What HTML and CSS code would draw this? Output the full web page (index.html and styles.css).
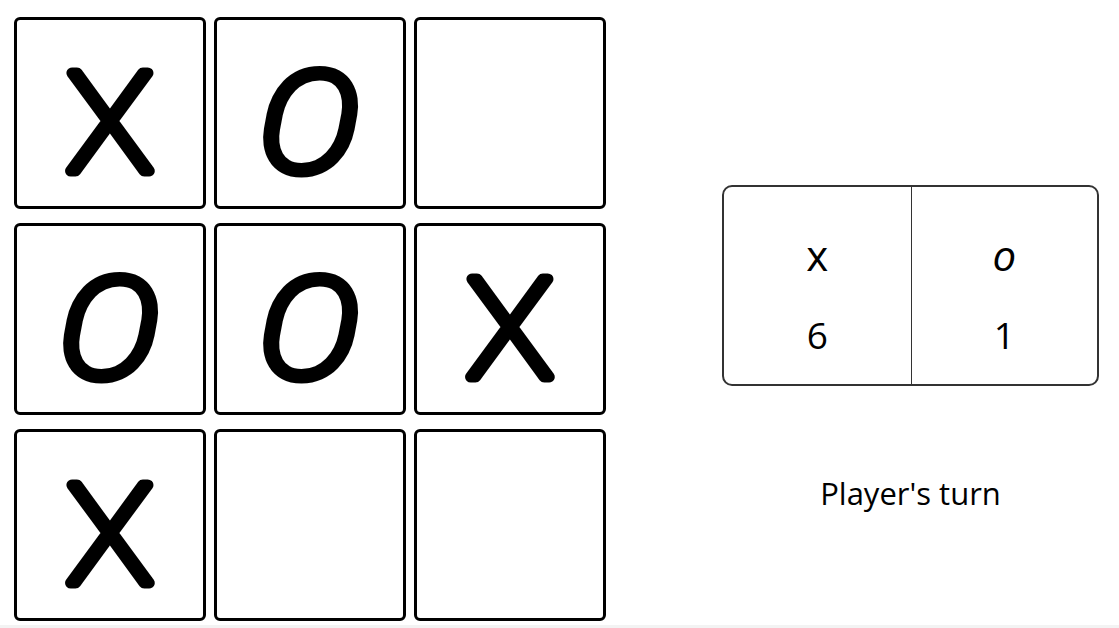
FILE: index.html
```html
<!DOCTYPE html>
<html lang="en">
<head>
<meta charset="utf-8">
<title>Tic Tac Toe</title>
<link rel="stylesheet" href="styles.css">
</head>
<body>
<main class="game">
  <section class="board">
    <div class="cell"><svg class="mark" viewBox="0 0 186 186"><text class="glyph glyph-x" x="93" y="151">X</text></svg></div>
    <div class="cell"><svg class="mark" viewBox="0 0 186 186"><text class="glyph glyph-o" x="92" y="151">O</text></svg></div>
    <div class="cell"></div>
    <div class="cell"><svg class="mark" viewBox="0 0 186 186"><text class="glyph glyph-o" x="92" y="151">O</text></svg></div>
    <div class="cell"><svg class="mark" viewBox="0 0 186 186"><text class="glyph glyph-o" x="92" y="151">O</text></svg></div>
    <div class="cell"><svg class="mark" viewBox="0 0 186 186"><text class="glyph glyph-x" x="93" y="151">X</text></svg></div>
    <div class="cell"><svg class="mark" viewBox="0 0 186 186"><text class="glyph glyph-x" x="93" y="151">X</text></svg></div>
    <div class="cell"></div>
    <div class="cell"></div>
  </section>
  <aside class="panel">
    <div class="score">
      <div class="score-col">
        <div class="player">x</div>
        <div class="points">6</div>
      </div>
      <div class="score-col">
        <div class="player player-o">o</div>
        <div class="points">1</div>
      </div>
    </div>
    <p class="turn">Player's turn</p>
  </aside>
</main>
<div class="bottom-strip"></div>
</body>
</html>
```
FILE: styles.css
```css
html, body {
  margin: 0;
  padding: 0;
  background: #fff;
}

body {
  font-family: "Open Sans", "Noto Sans", sans-serif;
  color: #000;
  height: 628px;
  overflow: hidden;
}

.game {
  display: flex;
  align-items: flex-start;
  padding: 17px 0 0 14px;
}

.board {
  display: grid;
  grid-template-columns: repeat(3, 192px);
  grid-auto-rows: 192px;
  column-gap: 8px;
  row-gap: 14px;
  flex: none;
}

.cell {
  box-sizing: border-box;
  border: 3px solid #000;
  border-radius: 6px;
  background: #fff;
}

.mark {
  display: block;
  width: 186px;
  height: 186px;
}

.glyph {
  font-family: Roboto, "Open Sans", sans-serif;
  font-weight: 100;
  font-size: 137px;
  text-anchor: middle;
  fill: #000;
  stroke: #000;
  stroke-width: 11;
  stroke-linejoin: round;
  stroke-linecap: round;
  transform-box: fill-box;
  transform-origin: center;
}

.glyph-x {
  transform: scaleX(1.05);
}

.glyph-o {
  font-style: italic;
  transform: scaleX(1.1);
}

.panel {
  flex: none;
  margin-left: 116px;
  width: 377px;
  padding-top: 168px;
}

.score {
  box-sizing: border-box;
  height: 201px;
  display: grid;
  grid-template-columns: 1fr 1fr;
  border: 2px solid #333;
  border-radius: 10px;
}

.score-col {
  display: flex;
  flex-direction: column;
  align-items: center;
  padding-top: 32px;
}

.score-col + .score-col {
  border-left: 1px solid #333;
}

.player {
  font-size: 42px;
  font-weight: 500;
  line-height: 72px;
}

.player-o {
  font-style: italic;
}

.points {
  font-size: 37px;
  font-weight: 500;
  line-height: 72px;
  margin-top: 8px;
}

.turn {
  margin: 89px 0 0;
  text-align: center;
  font-size: 31px;
  font-weight: 500;
  line-height: 36px;
}

.bottom-strip {
  position: fixed;
  left: 0;
  right: 0;
  bottom: 0;
  height: 3px;
  background: #f3f3f3;
}
```
